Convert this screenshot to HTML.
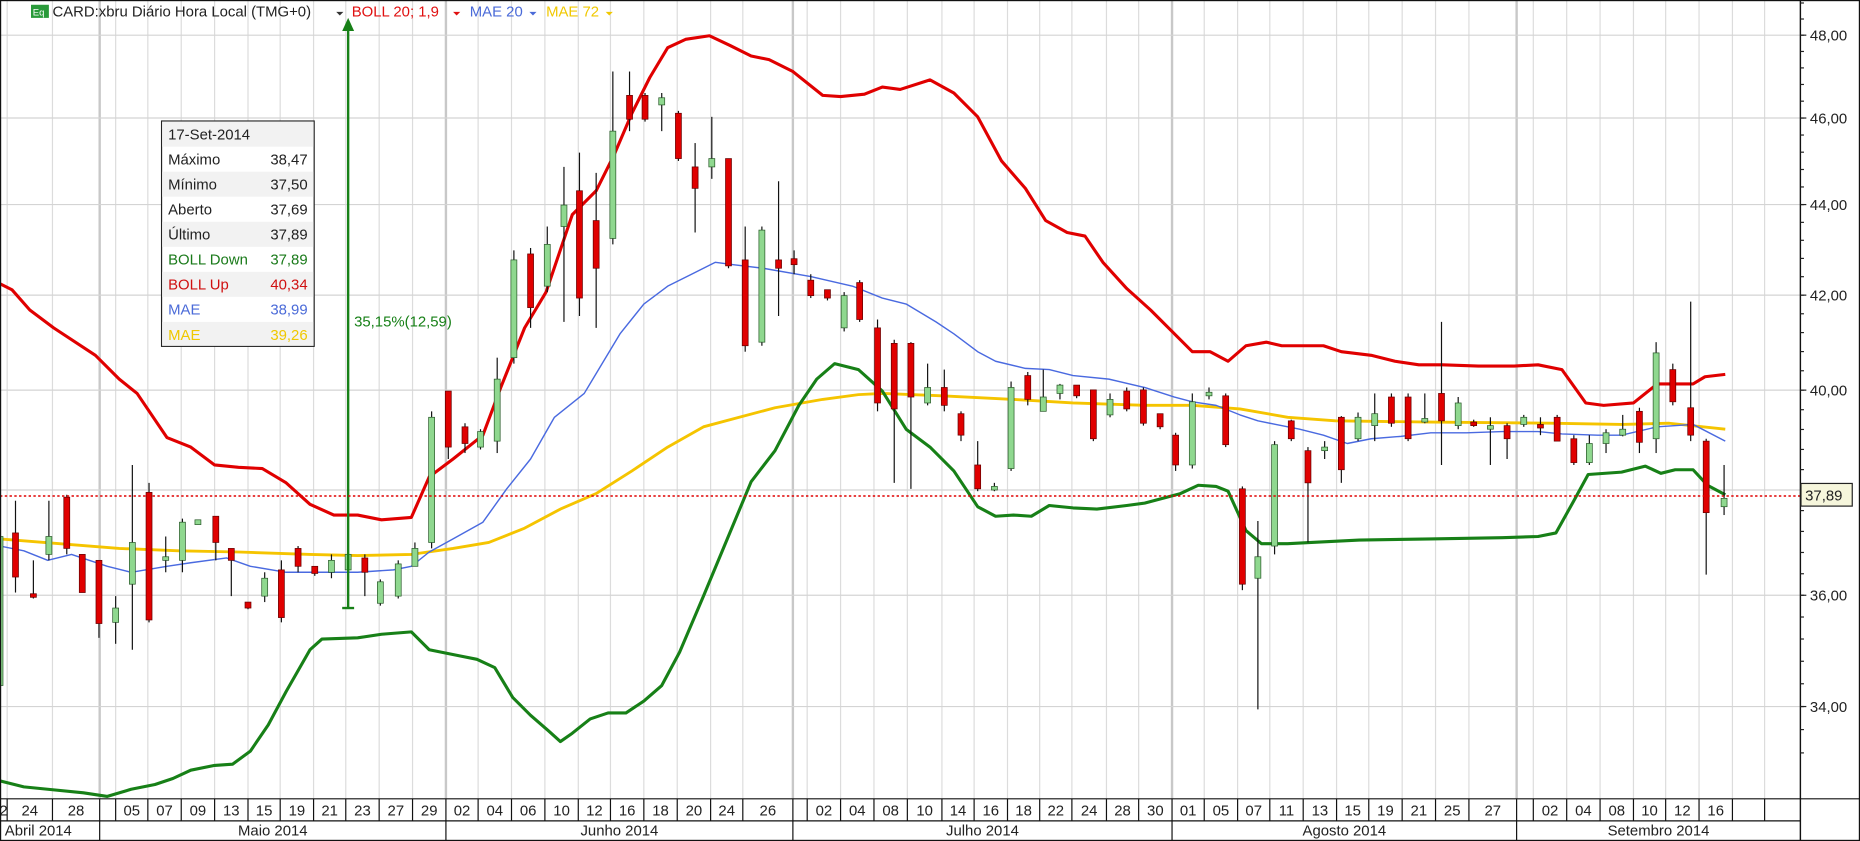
<!DOCTYPE html>
<html><head><meta charset="utf-8"><style>
html,body{margin:0;padding:0;background:#fff;overflow:hidden}
svg{display:block}
text{font-family:"Liberation Sans",sans-serif}
</style></head><body>
<svg id="s" width="1860" height="841" viewBox="0 0 1560 705.4" preserveAspectRatio="none" xmlns="http://www.w3.org/2000/svg">
<rect x="0" y="0" width="1560" height="705.4" fill="#fff"/>
<g id="grid"></g>
<g id="lines"></g>
<g id="candles"></g>
<line x1="292" y1="510" x2="292" y2="22" stroke="#178017" stroke-width="2"/>
<polygon points="292,15 287,26 297,26" fill="#178017"/>
<line x1="287" y1="510" x2="297" y2="510" stroke="#178017" stroke-width="2"/>
<text x="297" y="274" font-size="12.5" fill="#178017">35,15%(12,59)</text>
<line x1="0" y1="416" x2="1510" y2="416" stroke="#e00000" stroke-width="1.3" stroke-dasharray="2,2"/>
<g>
<rect x="135.5" y="101.5" width="128" height="189" fill="#fff" stroke="#222" stroke-width="1"/>
<rect x="136" y="102" width="127" height="21" fill="#f2f2f2"/>
<rect x="136" y="144" width="127" height="21" fill="#f2f2f2"/>
<rect x="136" y="186" width="127" height="21" fill="#f2f2f2"/>
<rect x="136" y="228" width="127" height="21" fill="#f2f2f2"/>
<rect x="136" y="270" width="127" height="20" fill="#f2f2f2"/>
<g font-size="12.5">
<text x="141" y="117" fill="#222">17-Set-2014</text>
<text x="141" y="138" fill="#222">Máximo</text><text x="258" y="138" fill="#222" text-anchor="end">38,47</text>
<text x="141" y="159" fill="#222">Mínimo</text><text x="258" y="159" fill="#222" text-anchor="end">37,50</text>
<text x="141" y="180" fill="#222">Aberto</text><text x="258" y="180" fill="#222" text-anchor="end">37,69</text>
<text x="141" y="201" fill="#222">Último</text><text x="258" y="201" fill="#222" text-anchor="end">37,89</text>
<text x="141" y="222" fill="#1a7a1a">BOLL Down</text><text x="258" y="222" fill="#1a7a1a" text-anchor="end">37,89</text>
<text x="141" y="243" fill="#d01010">BOLL Up</text><text x="258" y="243" fill="#d01010" text-anchor="end">40,34</text>
<text x="141" y="264" fill="#4a6ad8">MAE</text><text x="258" y="264" fill="#4a6ad8" text-anchor="end">38,99</text>
<text x="141" y="285" fill="#f0c800">MAE</text><text x="258" y="285" fill="#f0c800" text-anchor="end">39,26</text>
</g></g>
<rect x="26" y="4" width="15" height="11" fill="#2a9a3a"/>
<text x="27.5" y="13" font-size="8" fill="#fff">Eq</text>
<g font-size="12.5">
<text x="44" y="14" fill="#222">CARD:xbru Diário Hora Local (TMG+0)</text>
<polygon points="282,10 288,10 285,13" fill="#333"/>
<text x="295" y="14" fill="#e01010">BOLL 20; 1,9</text>
<polygon points="380,10 386,10 383,13" fill="#e01010"/>
<text x="394" y="14" fill="#4a6ad8">MAE 20</text>
<polygon points="444,10 450,10 447,13" fill="#4a6ad8"/>
<text x="458" y="14" fill="#f0c800">MAE 72</text>
<polygon points="508,10 514,10 511,13" fill="#f0c800"/>
</g>
<g id="axis"></g>
<rect x="1510.5" y="405.5" width="43" height="19" fill="#f6f6dc" stroke="#222" stroke-width="1"/>
<text x="1514" y="420" font-size="12.5" fill="#222">37,89</text>
<rect x="0.5" y="0.5" width="1559" height="704.4" fill="none" stroke="#111" stroke-width="1"/>
</svg>
<script>
var NS="http://www.w3.org/2000/svg";
function el(p,t,a,txt){var e=document.createElementNS(NS,t);for(var k in a)e.setAttribute(k,a[k]);if(txt!=null)e.textContent=txt;document.getElementById(p).appendChild(e);return e;}
function Y(p){return 29.5+1633*(Math.log(48)-Math.log(p));}
var vb=[6,44,83.6,97,124,152,180,208,235,263,290,318,346,374,401,429,457,485,512,540,568,596,623,665,677,705,733,761,790,817,845,872,899,928,955,983,1010,1038,1065,1093,1121,1148,1176,1204,1232,1272,1286,1314,1342,1370,1397,1425,1453,1480];
var months=[83.6,374,665,983,1272];
vb.forEach(function(x){var m=months.indexOf(x)>=0;el("grid","line",{x1:x,y1:0,x2:x,y2:670,stroke:m?"#c8c8c8":"#dcdcdc","stroke-width":m?2:1});});
for(var p=34;p<=48;p+=2){var y=Y(p);el("grid","line",{x1:0,y1:y,x2:1510,y2:y,stroke:"#d4d4d4","stroke-width":1});}
el("axis","line",{x1:1510,y1:0,x2:1510,y2:705,stroke:"#111","stroke-width":1.2});
for(var q=33.2;q<=48.9;q+=0.4){var yy=Y(q);el("axis","line",{x1:1510,y1:yy,x2:1513,y2:yy,stroke:"#222","stroke-width":1});}
for(var p=34;p<=48;p+=2){var yy=Y(p);el("axis","line",{x1:1510,y1:yy,x2:1515,y2:yy,stroke:"#222","stroke-width":1});if(p!=38)el("axis","text",{x:1518,y:yy+4.5,"font-size":12.5,fill:"#222"},p.toFixed(2).replace(".",","));}
el("axis","line",{x1:0,y1:670,x2:1560,y2:670,stroke:"#111","stroke-width":1});
el("axis","line",{x1:0,y1:688.5,x2:1510,y2:688.5,stroke:"#111","stroke-width":1});
var cells=[-22,6,44,83.6,97,124,152,180,208,235,263,290,318,346,374,401,429,457,485,512,540,568,596,623,665,677,705,733,761,790,817,845,872,899,928,955,983,1010,1038,1065,1093,1121,1148,1176,1204,1232,1272,1286,1314,1342,1370,1397,1425,1453,1480,1510];
var labs=["2","24","28","","05","07","09","13","15","19","21","23","27","29","02","04","06","10","12","16","18","20","24","26","","02","04","08","10","14","16","18","22","24","28","30","01","05","07","11","13","15","19","21","25","27","","02","04","08","10","12","16","",""];
for(var i=0;i<labs.length;i++){var a=cells[i],b=cells[i+1];if(a>0)el("axis","line",{x1:a,y1:670,x2:a,y2:688.5,stroke:"#111","stroke-width":1});if(labs[i])el("axis","text",{x:Math.max((a+b)/2,i==0?3:0),y:684,"font-size":12.5,fill:"#222","text-anchor":"middle"},labs[i]);}
var mb=[0,83.6,374,665,983,1272,1510];var mn=["Abril 2014","Maio 2014","Junho 2014","Julho 2014","Agosto 2014","Setembro 2014"];
for(var i=0;i<6;i++){if(i>0)el("axis","line",{x1:mb[i],y1:688.5,x2:mb[i],y2:705,stroke:"#111","stroke-width":1});el("axis","text",{x:(i==0?4:(mb[i]+mb[i+1])/2),y:701,"font-size":12.5,fill:"#222","text-anchor":i==0?"start":"middle"},mn[i]);}
function pl(pts,c,w){el("lines","polyline",{points:pts.map(function(p){return p.join(",")}).join(" "),fill:"none",stroke:c,"stroke-width":w,"stroke-linejoin":"round"});}
pl([[0,238],[10,243],[25,260],[45,275],[80,298],[100,318],[115,330],[140,367],[160,375],[180,390],[200,392],[220,393],[240,405],[260,423],[280,432],[300,432],[320,436],[345,434],[360,400],[380,385],[405,365],[420,325],[440,275],[458,245],[480,180],[500,160],[515,130],[530,95],[545,65],[560,40],[575,33],[595,30],[612,38],[630,47],[645,50],[665,60],[690,80],[705,81],[725,79],[740,73],[755,75],[780,67],[800,78],[820,98],[840,135],[860,158],[877,185],[895,195],[910,198],[925,220],[945,242],[965,260],[985,280],[1000,295],[1015,295],[1030,303],[1045,290],[1062,287],[1075,290],[1110,290],[1125,295],[1150,298],[1170,303],[1190,306],[1210,306],[1240,307],[1270,307],[1290,306],[1310,310],[1330,338],[1345,340],[1370,338],[1390,322],[1420,322],[1430,316],[1447,314]],"#e00000",2.6);
pl([[0,452],[50,456],[100,460],[150,462],[200,463],[260,465],[300,466],[345,465],[380,460],[410,455],[440,443],[470,427],[500,414],[530,395],[560,375],[590,358],[620,350],[650,342],[690,335],[720,331],[740,330],[790,332],[850,335],[900,338],[960,340],[1000,340],[1040,343],[1080,350],[1120,353],[1200,354],[1300,355],[1360,356],[1400,355],[1447,360]],"#f5c400",2.4);
pl([[0,458],[20,462],[40,470],[60,465],[90,475],[110,480],[140,475],[160,472],[190,468],[210,475],[240,480],[270,480],[300,480],[330,478],[345,475],[360,463],[380,452],[405,438],[425,410],[445,385],[465,350],[490,330],[505,305],[520,280],[540,255],[560,240],[580,230],[600,220],[615,222],[640,225],[680,232],[715,240],[740,250],[760,255],[785,270],[800,280],[820,295],[835,303],[860,309],[880,310],[900,315],[930,318],[960,325],[985,333],[1000,337],[1020,340],[1040,348],[1055,353],[1070,356],[1090,360],[1110,365],[1130,372],[1150,368],[1175,366],[1200,363],[1230,363],[1260,362],[1290,362],[1310,364],[1340,365],[1360,365],[1390,358],[1420,356],[1447,370]],"#4a6ae0",1.2);
pl([[0,655],[20,660],[40,662],[70,665],[90,668],[110,662],[130,658],[145,653],[160,646],[180,642],[195,641],[210,630],[225,608],[240,580],[260,545],[270,536],[300,535],[320,532],[345,530],[360,545],[385,550],[400,553],[415,560],[430,585],[445,600],[460,613],[470,622],[480,615],[495,603],[510,598],[525,598],[540,588],[555,575],[570,547],[590,500],[610,452],[630,404],[650,378],[670,340],[685,318],[700,305],[720,310],[740,328],[760,360],[780,375],[800,395],[820,425],[835,433],[850,432],[865,433],[880,424],[900,426],[920,427],[945,424],[960,422],[990,414],[1005,407],[1020,408],[1030,412],[1045,445],[1058,456],[1080,456],[1100,455],[1140,453],[1200,452],[1260,451],[1290,450],[1305,447],[1320,420],[1332,398],[1360,396],[1380,391],[1393,397],[1405,394],[1420,394],[1432,407],[1447,415]],"#178017",2.6);
var C=[[0,"g",450,575,445,578],[13,"r",447,484,420,497],[28,"r",498,501,470,502],[41,"g",450,465,420,470],[56,"r",417,460,415,465],[69,"r",465,497,465,497],[83,"r",470,523,470,535],[97,"g",510,522,500,540],[111,"g",455,490,390,545],[125,"r",413,520,405,522],[139,"g",467,470,450,480],[153,"g",438,470,435,480],[166,"g",436,440,436,440],[181,"r",433,455,433,470],[194,"r",460,470,460,500],[208,"r",505,510,505,511],[222,"g",485,500,480,505],[236,"r",478,518,470,522],[250,"r",460,475,458,480],[264,"r",475,481,475,483],[278,"g",470,480,465,485],[292,"g",465,478,460,510],[306,"r",468,480,465,500],[319,"g",488,506,486,508],[334,"g",473,500,470,502],[348,"g",460,475,455,475],[362,"g",350,455,345,460],[376,"r",328,375,328,385],[390,"r",358,372,355,380],[403,"g",362,375,360,377],[417,"g",318,370,300,380],[431,"g",218,300,210,305],[445,"r",213,258,208,275],[459,"g",205,240,190,245],[473,"g",172,190,140,270],[486,"r",160,250,128,265],[500,"r",185,225,145,275],[514,"g",110,200,60,205],[528,"r",80,100,60,110],[541,"r",80,100,78,102],[555,"g",82,88,78,110],[569,"r",95,133,93,135],[583,"r",140,158,120,195],[597,"g",133,140,98,150],[611,"r",133,223,133,225],[625,"r",218,290,190,295],[639,"g",193,287,190,290],[653,"r",218,225,152,265],[666,"r",217,222,210,230],[680,"r",235,248,230,250],[694,"r",243,250,243,252],[708,"g",248,275,245,278],[721,"r",237,268,235,270],[736,"r",275,338,268,345],[750,"r",288,343,285,405],[764,"r",288,333,287,410],[778,"g",325,338,305,340],[792,"r",325,340,310,345],[806,"r",347,365,345,370],[820,"r",390,410,370,412],[834,"g",408,411,405,412],[848,"g",325,393,320,395],[862,"r",315,335,312,340],[875,"g",333,345,310,345],[889,"g",323,330,322,335],[903,"r",323,332,323,334],[917,"r",327,368,327,370],[931,"g",335,348,330,350],[945,"r",328,343,325,345],[959,"r",327,355,325,357],[973,"r",347,358,347,360],[986,"r",365,390,363,395],[1000,"g",337,390,330,393],[1014,"g",329,332,325,335],[1028,"r",332,373,330,375],[1042,"r",410,490,408,495],[1055,"g",467,485,437,595],[1069,"g",373,458,370,465],[1083,"r",353,368,352,370],[1097,"r",378,405,375,455],[1111,"g",375,378,370,385],[1125,"r",350,394,349,405],[1139,"g",350,368,346,370],[1153,"g",347,357,330,370],[1167,"r",333,355,330,358],[1181,"r",333,368,330,370],[1195,"g",351,354,330,355],[1209,"r",330,353,270,390],[1223,"g",338,357,333,360],[1236,"r",354,357,352,358],[1250,"g",357,360,350,390],[1264,"r",357,368,355,385],[1278,"g",350,356,348,358],[1292,"r",356,359,350,365],[1306,"r",350,370,348,370],[1320,"r",368,388,365,390],[1333,"g",372,388,365,390],[1347,"g",363,372,360,380],[1361,"g",360,365,348,366],[1375,"r",345,371,342,380],[1389,"g",296,368,287,380],[1403,"r",310,337,305,340],[1418,"r",342,365,253,370],[1431,"r",370,430,368,482],[1446,"g",418,425,390,432]];
C.forEach(function(c){var x=c[0];el("candles","line",{x1:x,y1:c[4],x2:x,y2:c[5],stroke:"#111","stroke-width":1});el("candles","rect",{x:x-2.5,y:c[2],width:5,height:Math.max(c[3]-c[2],1.5),fill:c[1]=="g"?"#8fd88f":"#e00000",stroke:c[1]=="g"?"#2a5a2a":"#600","stroke-width":0.6});});
</script>
</body></html>
